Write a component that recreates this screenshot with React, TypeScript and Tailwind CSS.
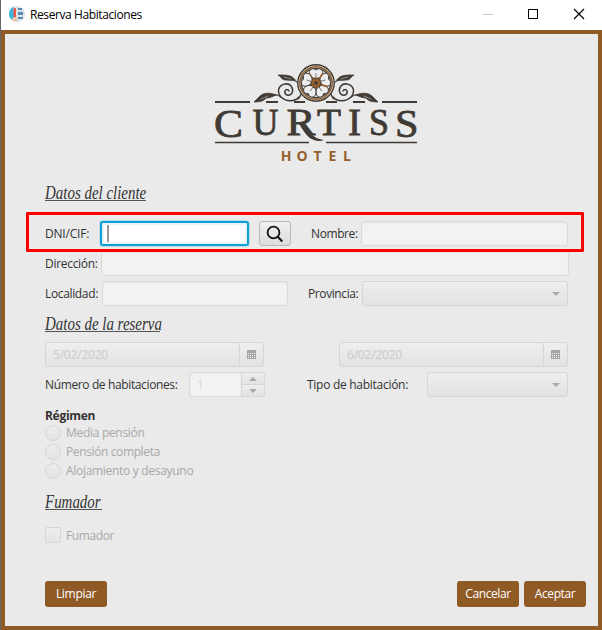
import type { ReactNode } from "react";

const disabledField = "rounded-[3px] border border-[#dadada] bg-[#f2f2f2] shadow-[inset_0_1px_2px_#e6e6e6]";
const disabledButton = "border border-[#d6d6d6] bg-linear-to-b from-[#eeeeee] to-[#e3e3e3]";

function Heading({ children, className }: { children: ReactNode; className: string }) {
  return (
    <h2 className={`h-[17px] whitespace-nowrap border-b border-[#555] font-['Liberation_Serif',serif] italic text-[18px] leading-[19px] text-[#333] ${className}`}>
      <span className="inline-block origin-left scale-x-[0.83]">{children}</span>
    </h2>
  );
}

function Label({ children, className }: { children: ReactNode; className: string }) {
  return <label className={`shrink-0 whitespace-nowrap leading-[25px] text-[#333] ${className}`}>{children}</label>;
}

function Combo({ className }: { className: string }) {
  return (
    <div className={`flex h-[25px] items-center justify-end rounded-[3px] pr-[7px] ${disabledButton} ${className}`}>
      <svg width="8" height="4" viewBox="0 0 8 4"><path d="M0 0h8L4 4z" fill="#aaa" /></svg>
    </div>
  );
}

function DateField({ value, className }: { value: string; className: string }) {
  return (
    <div className={`flex h-[25px] rounded-[3px] ${disabledButton} ${className}`}>
      <span className="flex-1 pl-[7px] leading-[23px] tracking-[-0.2px] text-[#c9c9c9]">{value}</span>
      <div className="flex w-[24px] items-center justify-center border-l border-[#d6d6d6]">
        <svg width="9" height="9" viewBox="0 0 9 9" shapeRendering="crispEdges">
          <path d="M0 0h9v9H0z" fill="#a5a5a5" />
          <path d="M1 3.5h7M1 5.5h7M1 7.5h7" stroke="#eee" strokeDasharray="1 1" />
        </svg>
      </div>
    </div>
  );
}

function Radio({ children, className }: { children: ReactNode; className: string }) {
  return (
    <div className="flex h-[19px] items-center">
      <span className="size-4 rounded-full border border-[#d6d6d6] bg-linear-to-b from-[#ededed] to-[#e3e3e3]" />
      <span className={`ml-[5px] whitespace-nowrap leading-[19px] text-[#a8a8a8] ${className}`}>{children}</span>
    </div>
  );
}

function ActionButton({ children, className }: { children: ReactNode; className: string }) {
  return <button className={`h-[26px] w-[62px] rounded-[3px] bg-[#905a27] text-center text-white ${className}`}>{children}</button>;
}

function Scroll() {
  return (
    <g fill="none" stroke="#403a35" strokeLinecap="round">
      <path d="M334 99c-5-5-5-14-1-18" strokeWidth="1.3" />
      <path d="M333 97c4 5 13 5 18 0c5-6 2-12-4-13c-6-1-9 5-7 9c3 4 8 2 7-2c-1-2-3-2-4 0" strokeWidth="1.5" />
      <path d="M351 97q4-3 9-2" strokeWidth="1.2" />
      <path d="M333 84q2-3 6-4" strokeWidth="1.1" />
      <path d="M337 80c3-5 8-5 17-5c-4 2-3 5-8 5c-3 0-5 1-9 0z" fill="#403a35" strokeWidth=".8" />
      <path d="M356 95c6-3 13-2 16 1l6 6c-6 0-10-1-12-4c-3 0-6-1-10-3z" fill="#403a35" strokeWidth=".8" />
      <path d="M341 79l7-2M364 96l7 3" stroke="#eaeaea" strokeWidth=".5" />
    </g>
  );
}

function Logo() {
  return (
    <svg width="204" height="104" viewBox="214 61 204 104" className="ml-[209px] mt-[27px] block">
      <g stroke="#403a35">
        <path d="M215 102h35M266 102h12M294 102h11M326 102h11M353 102h12M382 102h35" strokeWidth="2" />
        <path d="M215 142.5h94M326 142.5h91" strokeWidth="1.3" />
      </g>
      <Scroll />
      <g transform="translate(632 0) scale(-1 1)"><Scroll /></g>
      <circle cx="316" cy="83" r="18.2" fill="#eaeaea" stroke="#403a35" strokeWidth="1.4" />
      <circle cx="316" cy="83" r="16.2" fill="none" stroke="#94602c" strokeWidth="1.5" />
      <circle cx="316" cy="83" r="14.6" fill="none" stroke="#403a35" strokeWidth="1.4" />
      {[0, 72, 144, 216, 288].map((angle) => (
        <g key={angle} transform={`rotate(${angle} 316 83)`}>
          <path d="M316 79c-5-1-8-6-6-9q3-3 6 0q3-3 6 0c2 3-1 8-6 9z" fill="#ededed" stroke="#403a35" strokeWidth=".9" />
          <path d="M316 78v-5" stroke="#666" strokeWidth=".8" />
          <path d="M316 87v8" stroke="#94602c" strokeWidth="1.6" />
        </g>
      ))}
      <circle cx="316" cy="83" r="5" fill="#94602c" stroke="#403a35" strokeWidth="1.1" strokeDasharray="2 1" />
      <circle cx="316" cy="83" r="1.8" fill="#403a35" />
      <g fill="#403a35" stroke="#403a35" strokeWidth=".8" fontFamily="Liberation Serif, serif" fontSize="37">
        <text x="214" y="137.300" fontSize="40" textLength="29" lengthAdjust="spacingAndGlyphs">C</text>
        <text x="252.500" y="134.700" textLength="26" lengthAdjust="spacingAndGlyphs">U</text>
        <text x="286.500" y="134.700" textLength="29" lengthAdjust="spacingAndGlyphs">R</text>
        <text x="317" y="134.700" textLength="24" lengthAdjust="spacingAndGlyphs">T</text>
        <text x="348" y="134.700" textLength="13" lengthAdjust="spacingAndGlyphs">I</text>
        <text x="369" y="134.700" textLength="20" lengthAdjust="spacingAndGlyphs">S</text>
        <text x="395" y="137.300" fontSize="40" textLength="23.500" lengthAdjust="spacingAndGlyphs">S</text>
      </g>
      <path d="M298 122h5c5 10 11 17 21 18q-5 2-10 0c-7-2-11-10-16-18z" fill="#403a35" />
      <g fill="#94602c" fontFamily="Open Sans, sans-serif" fontWeight="700" fontSize="14" textAnchor="middle">
        <text x="286" y="161">H</text>
        <text x="302" y="161">O</text>
        <text x="317.5" y="161">T</text>
        <text x="332.5" y="161">E</text>
        <text x="347" y="161">L</text>
      </g>
    </svg>
  );
}

function TitleBar() {
  return (
    <header className="flex h-[30px] items-center bg-white pl-2">
      <svg width="16" height="16" viewBox="0 0 16 16" className="-mt-[2px]">
        <circle cx="8" cy="8" r="8" fill="#d9e2e8" />
        <path d="M4.500 .8A8 8 0 0 0 3 14.200L5 12z" fill="#35b4dc" />
        <path d="M3 12l5-1v5a8 8 0 0 1-5-2z" fill="#efc6a8" />
        <path d="M4.500 2.500L7 2v9H4.500z" fill="#ee5346" />
        <path d="M9 2h4v2H9zM9 6h5v3H9zM9 11h5v2H9z" fill="#5c88b5" />
      </svg>
      <h1 className="ml-[5px] whitespace-nowrap text-[12px] tracking-[-0.4px] text-black">Reserva Habitaciones</h1>
      <svg width="104" height="12" viewBox="0 0 104 12" className="-mt-0.5 ml-auto mr-[16px]" fill="none" shapeRendering="crispEdges">
        <path d="M1 6.500h10" stroke="#c8c8c8" />
        <path d="M46.500 1.500h9v9h-9z" stroke="#000" />
        <path d="M92 1l10 10M102 1L92 11" stroke="#000" shapeRendering="auto" strokeWidth="1.2" />
      </svg>
    </header>
  );
}

export default function App() {
  return (
    <div className="h-[630px] w-[602px] overflow-hidden border-l border-[#666] bg-white font-['Open_Sans','Noto_Sans',sans-serif] text-[12px]">
      <TitleBar />
      <main className="relative h-[600px] border-4 border-[#905a27] bg-[#eaeaea]">
        <Logo />
        <div className="ml-10">
          <Heading className="mt-[19px] w-[101px]">Datos del cliente</Heading>
          <div className="mt-[20px] flex h-[25px]">
            <Label className="w-[55px] tracking-[-0.2px]">DNI/CIF:</Label>
            <div className="flex w-[149px] items-center rounded-[3px] border-2 border-[#0f9fd2] bg-white pl-[5px] shadow-[0_0_1px_1px_#b9dce9,inset_0_0_0_2px_#e5f4fa]">
              <span className="h-[17px] w-[2px] bg-[#999]" />
            </div>
            <button className="ml-[10px] flex w-[32px] items-center justify-center rounded-[3px] border border-[#b9b9b9] bg-linear-to-b from-[#f0f0f0] to-[#dddddd]">
              <svg width="18" height="18" viewBox="0 0 18 18" fill="none" stroke="#111" strokeWidth="1.8"><circle cx="7.500" cy="7.500" r="5.900" /><path d="M11.500 11.500l4.800 5" strokeWidth="2" /></svg>
            </button>
            <Label className="ml-[20px] w-[50px] tracking-[-0.4px]">Nombre:</Label>
            <div className={`w-[207px] ${disabledField}`} />
          </div>
          <div className="mt-[5px] flex h-[25px]">
            <Label className="w-[56px] tracking-[-0.3px]">Dirección:</Label>
            <div className={`w-[468px] ${disabledField}`} />
          </div>
          <div className="mt-[5px] flex h-[25px]">
            <Label className="w-[57px] tracking-[-0.35px]">Localidad:</Label>
            <div className={`w-[186px] ${disabledField}`} />
            <Label className="ml-[20px] w-[54px] tracking-[-0.4px]">Provincia:</Label>
            <Combo className="w-[206px]" />
          </div>
          <Heading className="mt-[9px] w-[115px]">Datos de la reserva</Heading>
          <div className="mt-[10px] flex gap-[75px]">
            <DateField value="5/02/2020" className="w-[219px]" />
            <DateField value="6/02/2020" className="w-[229px]" />
          </div>
          <div className="mt-[5px] flex h-[25px]">
            <Label className="w-[144px] tracking-[-0.37px]">Número de habitaciones:</Label>
            <div className="flex w-[76px]">
              <div className={`w-[52px] rounded-r-none! border-r-0! pl-[7px] leading-[23px] text-[#d6d6d6] ${disabledField}`}>1</div>
              <div className="flex w-[24px] flex-col">
                <div className={`flex h-[13px] items-center justify-center rounded-tr-[3px] ${disabledButton}`}><svg width="8" height="4"><path d="M0 4h8L4 0z" fill="#aaa" /></svg></div>
                <div className={`flex h-[12px] items-center justify-center rounded-br-[3px] border-t-0! ${disabledButton}`}><svg width="8" height="4"><path d="M0 0h8L4 4z" fill="#aaa" /></svg></div>
              </div>
            </div>
            <Label className="ml-[42px] w-[120px] tracking-[-0.28px]">Tipo de habitación:</Label>
            <Combo className="w-[141px]" />
          </div>
          <p className="mt-[10px] h-[17px] text-[12px] font-bold leading-[17px] tracking-[-0.3px] text-[#333]">Régimen</p>
          <div className="-mt-px">
            <Radio className="tracking-[-0.3px]">Media pensión</Radio>
            <Radio className="tracking-[-0.38px]">Pensión completa</Radio>
            <Radio className="tracking-[-0.3px]">Alojamiento y desayuno</Radio>
          </div>
          <Heading className="mt-[13px] w-[57px]">Fumador</Heading>
          <div className="mt-[17px] flex h-[16px] items-center">
            <span className={`size-4 rounded-[2px] ${disabledButton}`} />
            <span className="ml-[5px] mt-[2px] leading-4 tracking-[-0.4px] text-[#a8a8a8]">Fumador</span>
          </div>
          <div className="mt-[38px] flex">
            <ActionButton className="tracking-[-0.3px]">Limpiar</ActionButton>
            <ActionButton className="ml-[350px] tracking-[-0.4px]">Cancelar</ActionButton>
            <ActionButton className="ml-[5px] tracking-[-0.4px]">Aceptar</ActionButton>
          </div>
        </div>
        <div className="pointer-events-none absolute left-[21px] top-[178px] h-[40px] w-[558px] rounded-[1px] border-[3px] border-[#fb0000]" />
      </main>
    </div>
  );
}
